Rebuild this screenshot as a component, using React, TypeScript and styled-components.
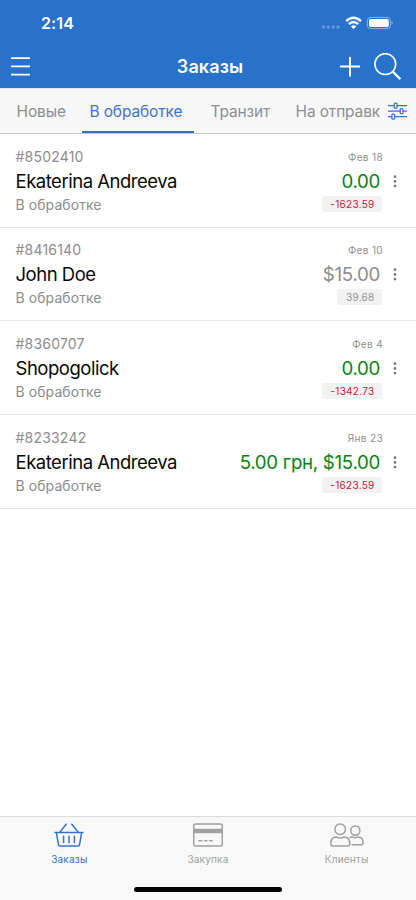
import React from "react";
import styled, { createGlobalStyle } from "styled-components";

const GlobalStyle = createGlobalStyle`
  * { box-sizing: border-box; }
  body { margin: 0; background: #fff; }
`;

const Screen = styled.div`
  display: flex;
  flex-direction: column;
  width: 416px;
  height: 900px;
  overflow: hidden;
  background: #fff;
  font-family: Inter, "Liberation Sans", sans-serif;
  white-space: nowrap;
  svg { display: block; flex: none; }
`;

const Header = styled.header`
  flex: none;
  height: 88px;
  background: #2872cb;
  color: #fff;
`;

const StatusBar = styled.div`
  display: flex;
  align-items: center;
  justify-content: space-between;
  height: 46px;
  padding: 0 22px 0 41px;
`;

const Clock = styled.span`
  font-size: 16px;
  font-weight: 600;
  letter-spacing: 0.1px;
`;

const NavBar = styled.div`
  display: grid;
  grid-template-columns: 82px 1fr 82px;
  align-items: center;
  height: 42px;
  padding: 0 10px;
`;

const Title = styled.h1`
  margin: 0;
  padding-left: 4px;
  text-align: center;
  font-size: 18px;
  line-height: 24px;
  font-weight: 600;
  letter-spacing: 0.1px;
`;

const Actions = styled.div`
  display: flex;
  align-items: center;
  justify-content: flex-end;
  gap: 14px;
  padding-right: 5px;
`;

const Tabs = styled.nav`
  display: flex;
  flex: none;
  height: 46px;
  background: #f7f7f7;
  border-top: 1px solid #dfe5ee;
  border-bottom: 1px solid #c6c6c8;
`;

const TabList = styled.div`
  display: flex;
  width: 380px;
  padding-left: 9px;
  overflow: hidden;
`;

const Tab = styled.div<{ $active?: boolean; $width: number }>`
  flex: none;
  width: ${(p) => p.$width}px;
  margin-right: ${(p) => (p.$active ? 9 : 0)}px;
  padding: 1px 0 0 7.5px;
  font-size: 15.5px;
  line-height: 43px;
  letter-spacing: -0.14px;
  color: ${(p) => (p.$active ? "#4473c5" : "#8e8e93")};
  border-bottom: 2px solid ${(p) => (p.$active ? "#3d6dc0" : "transparent")};
`;

const FilterButton = styled.div`
  padding: 13px 0 0 7px;
`;

const Orders = styled.main`
  flex: 1;
`;

const Order = styled.article`
  display: grid;
  grid-template-columns: 1fr auto 20px;
  height: 93.7px;
  padding: 12.6px 11px 0 15.5px;
  border-bottom: 1px solid #e8e8e8;
`;

const Details = styled.div`
  display: flex;
  flex-direction: column;
`;

const Amounts = styled(Details)`
  align-items: flex-end;
`;

const OrderId = styled.span`
  font-size: 14px;
  line-height: 20px;
  letter-spacing: 0.2px;
  color: #8c8c8c;
`;

const OrderStatus = styled(OrderId)`
  letter-spacing: 0.08px;
`;

const Customer = styled.span`
  font-size: 18.5px;
  line-height: 28px;
  letter-spacing: -0.48px;
  color: #080808;
`;

const OrderDate = styled.span`
  padding-right: 2px;
  font-size: 10px;
  line-height: 20px;
  letter-spacing: 0.35px;
  color: #8e8e8e;
`;

const Total = styled.span<{ $muted?: boolean }>`
  padding: 1px 5px 0 0;
  font-size: 18.7px;
  line-height: 27px;
  letter-spacing: -0.3px;
  color: ${(p) => (p.$muted ? "#8c8c8c" : "#078310")};
`;

const Balance = styled.span<{ $muted?: boolean }>`
  margin: 1px 3px 0 0;
  padding: 0 7.5px 0 8.5px;
  border-radius: 3px;
  background: #f1f1f1;
  font-size: 10px;
  line-height: 16px;
  letter-spacing: 0.28px;
  color: ${(p) => (p.$muted ? "#929292" : "#c4193b")};
`;

const More = styled.div`
  display: flex;
  justify-content: center;
  padding-top: 28px;
`;

const TabBar = styled.footer`
  flex: none;
  height: 84px;
  background: #f8f8f8;
  border-top: 1px solid #dcdcdc;
`;

const TabBarItems = styled.div`
  display: grid;
  grid-template-columns: repeat(3, 1fr);
  height: 69.5px;
`;

const TabBarItem = styled.div<{ $active?: boolean }>`
  display: flex;
  flex-direction: column;
  align-items: center;
  padding-top: 6px;
  font-size: 10px;
  line-height: 14px;
  letter-spacing: 0.2px;
  color: ${(p) => (p.$active ? "#3673c7" : "#a0a0a0")};
  svg { margin-bottom: 5px; }
`;

const HomeIndicator = styled.div`
  width: 148px;
  height: 5px;
  margin: 0 auto;
  border-radius: 3px;
  background: #000;
`;

const StatusIcons = () => (
  <svg width="73" height="16" viewBox="0 0 73 16" fill="#fff">
    <g opacity=".28">
      <circle cx="2.4" cy="12" r="1.7" />
      <circle cx="7.3" cy="12" r="1.7" />
      <circle cx="12.2" cy="12" r="1.7" />
      <circle cx="17.1" cy="12" r="1.7" />
    </g>
    <g fill="none" stroke="#fff" strokeWidth="2.3">
      <path d="M25.2 6.1Q32.6-.7 40 6.100" />
      <path d="M27.900 9.200Q32.600 4.700 37.300 9.200" />
    </g>
    <path d="M29.900 11.400q2.700-2.300 5.400 0l-2.700 2.700z" />
    <rect x="46.400" y="2.400" width="23" height="11.200" rx="3.200" fill="none" stroke="#fff" strokeOpacity=".45" />
    <rect x="48" y="4" width="19.800" height="8" rx="1.800" />
    <path d="M70.600 6q2.400 1.900 0 3.800z" opacity=".5" />
  </svg>
);

const MenuIcon = () => (
  <svg width="20" height="20" viewBox="0 0 20 20" fill="none" stroke="#fff" strokeWidth="1.7">
    <path d="M1 1.1h19M1 9.400h19M1 17.600h19" />
  </svg>
);

const PlusIcon = () => (
  <svg width="20" height="20" viewBox="0 0 20 20" fill="none" stroke="#fff" strokeWidth="2">
    <path d="M0 9.500h20M10 0v19.500" />
  </svg>
);

const SearchIcon = () => (
  <svg width="27" height="28" viewBox="0 0 27 28" fill="none" stroke="#fff" strokeWidth="1.6">
    <circle cx="11.300" cy="11.100" r="10.400" />
    <path d="m18.700 18.500 7.600 7.600" strokeWidth="2.200" />
  </svg>
);

const FilterIcon = () => (
  <svg width="21" height="18" viewBox="0 0 21 18" fill="#f7f7f7" stroke="#3974c9" strokeWidth="1.3">
    <path d="M1 3.700h19M1 9.100h19M1 14.600h19" />
    <rect x="7.200" y="1.100" width="2.800" height="5" rx=".9" />
    <rect x="13.200" y="6.600" width="2.800" height="5" rx=".9" />
    <rect x="4.900" y="12.100" width="2.800" height="5" rx=".9" />
  </svg>
);

const DotsIcon = () => (
  <svg width="4" height="13" viewBox="0 0 4 13" fill="#777">
    <circle cx="2" cy="1.700" r="1.350" />
    <circle cx="2" cy="6.400" r="1.350" />
    <circle cx="2" cy="11.100" r="1.350" />
  </svg>
);

const BasketIcon = () => (
  <svg width="30" height="24" viewBox="0 0 30 24" fill="none" stroke="currentColor" strokeWidth="1.5" strokeLinecap="round" strokeLinejoin="round">
    <path d="M1 9.600h28M5.600 9.400 12.200 1.200M24.400 9.400l-6.600-8.200M2.400 9.800l2.100 12q.2 1.200 1.400 1.200h18.200q1.200 0 1.400-1.200l2.100-12M9.600 13.200v6.300M15 13.200v6.300M20.400 13.200v6.300" />
  </svg>
);

const CardIcon = () => (
  <svg width="30" height="24" viewBox="0 0 30 24" fill="none" stroke="currentColor" strokeWidth="1.5">
    <rect x=".75" y=".9" width="28.500" height="22.200" rx="2" />
    <path d="M1 8h28" strokeWidth="4.400" />
    <path d="M5.300 17.700h4.200M11.200 17.700h3.200M16 17.700h3.800" />
  </svg>
);

const PeopleIcon = () => (
  <svg width="34" height="24" viewBox="0 0 34 24" fill="none" stroke="currentColor" strokeWidth="1.5" strokeLinecap="round">
    <circle cx="10.200" cy="6.300" r="5.300" />
    <path d="M6.200 14q4 2 8 0c3.700.2 5.600 2.600 5.600 6.700 0 1.700-.6 2.200-2 2.200H2.800c-1.400 0-2-.5-2-2.200C.8 16.600 2.700 14.200 6.200 14Z" />
    <circle cx="25.300" cy="7.600" r="4.600" />
    <path d="M20 14.400q1-.5 2-.5 3.300 1.500 6.600 0c3.200.2 4.500 2.200 4.500 5.500 0 1.700-.5 2.300-1.900 2.300h-9" />
  </svg>
);

const orders = [
  { id: "8502410", customer: "Ekaterina Andreeva", date: "Фев 18", total: "0.00", balance: "-1623.59" },
  { id: "8416140", customer: "John Doe", date: "Фев 10", total: "$15.00", balance: "39.68", muted: true },
  { id: "8360707", customer: "Shopogolick", date: "Фев 4", total: "0.00", balance: "-1342.73" },
  { id: "8233242", customer: "Ekaterina Andreeva", date: "Янв 23", total: "5.00 грн, $15.00", balance: "-1623.59" },
];

export default function App() {
  return (
    <Screen>
      <GlobalStyle />
      <Header>
        <StatusBar>
          <Clock>2:14</Clock>
          <StatusIcons />
        </StatusBar>
        <NavBar>
          <MenuIcon />
          <Title>Заказы</Title>
          <Actions>
            <PlusIcon />
            <SearchIcon />
          </Actions>
        </NavBar>
      </Header>
      <Tabs>
        <TabList>
          <Tab $width={73}>Новые</Tab>
          <Tab $width={112} $active>В обработке</Tab>
          <Tab $width={85}>Транзит</Tab>
          <Tab $width={110}>На отправку</Tab>
        </TabList>
        <FilterButton><FilterIcon /></FilterButton>
      </Tabs>
      <Orders>
        {orders.map((o) => (
          <Order key={o.id}>
            <Details>
              <OrderId>#{o.id}</OrderId>
              <Customer>{o.customer}</Customer>
              <OrderStatus>В обработке</OrderStatus>
            </Details>
            <Amounts>
              <OrderDate>{o.date}</OrderDate>
              <Total $muted={o.muted}>{o.total}</Total>
              <Balance $muted={o.muted}>{o.balance}</Balance>
            </Amounts>
            <More><DotsIcon /></More>
          </Order>
        ))}
      </Orders>
      <TabBar>
        <TabBarItems>
          <TabBarItem $active><BasketIcon />Заказы</TabBarItem>
          <TabBarItem><CardIcon />Закупка</TabBarItem>
          <TabBarItem><PeopleIcon />Клиенты</TabBarItem>
        </TabBarItems>
        <HomeIndicator />
      </TabBar>
    </Screen>
  );
}
